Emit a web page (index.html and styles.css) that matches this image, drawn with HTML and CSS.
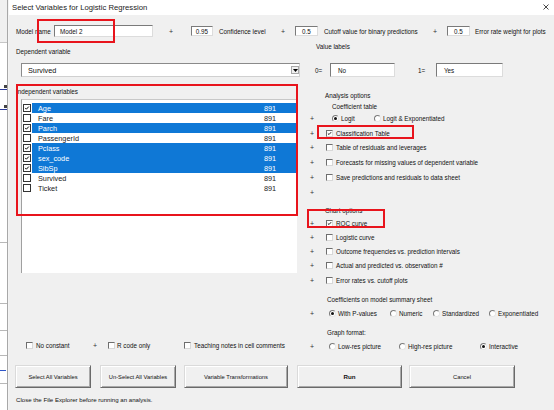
FILE: index.html
```html
<!DOCTYPE html>
<html>
<head>
<meta charset="utf-8">
<title>Select Variables for Logistic Regression</title>
<link rel="stylesheet" href="styles.css">
</head>
<body>
<div class="page">
  <div class="strip">
    <div class="strip-inner">
      <div class="s-gray"></div>
      <div class="s-frag s-f1"></div>
      <div class="s-uline"></div>
      <div class="s-frag s-f2"></div>
      <div class="s-uline"></div>
      <div class="s-line s-l1"></div>
      <div class="s-line s-l2"></div>
      <div class="s-line s-l3"></div>
      <div class="s-line s-l4"></div>
      <div class="s-blue"></div>
      <div class="s-line s-l5"></div>
    </div>
  </div>

  <div class="dialog">
    <div class="titlebar">
      <span class="title">Select Variables for Logistic Regression</span>
      <svg class="close" width="6" height="6" viewBox="0 0 6 6"><path d="M0.5 0.5 L5.5 5.5 M5.5 0.5 L0.5 5.5" stroke="#333" stroke-width="0.9" fill="none"/></svg>
    </div>

    <div class="content">
      <div class="toprow">
        <span class="lbl w-model">Model name</span>
        <span class="inp inp-model">Model 2</span>
        <span class="plus gap14">+</span>
        <span class="inp inp-num w22">0.95</span>
        <span class="lbl w60 ml6">Confidence level</span>
        <span class="plus">+</span>
        <span class="inp inp-num w23">0.5</span>
        <span class="lbl w107 ml6">Cutoff value for binary predictions</span>
        <span class="plus">+</span>
        <span class="inp inp-num w23">0.5</span>
        <span class="lbl ml5">Error rate weight for plots</span>
      </div>

      <div class="cols">
        <div class="leftcol">
          <div class="dep-label">Dependent variable</div>
          <div class="select">
            <span class="select-text">Survived</span>
            <span class="drop-btn"><svg width="5" height="3" viewBox="0 0 5 3"><path d="M0 0 H5 L2.5 3 Z" fill="#000"/></svg></span>
          </div>
          <div class="indep-label">Independent variables</div>
          <div class="list">
            <div class="row"><span class="lcb"><svg viewBox="0 0 8 8"><path d="M1.6 3.9 L3.2 5.6 L6.4 2.1" stroke="#000" stroke-width="1.3" fill="none"/></svg></span><span class="cell sel"><span class="name">Age</span><span class="num">891</span></span></div>
            <div class="row"><span class="lcb"></span><span class="cell"><span class="name">Fare</span><span class="num">891</span></span></div>
            <div class="row"><span class="lcb"><svg viewBox="0 0 8 8"><path d="M1.6 3.9 L3.2 5.6 L6.4 2.1" stroke="#000" stroke-width="1.3" fill="none"/></svg></span><span class="cell sel"><span class="name">Parch</span><span class="num">891</span></span></div>
            <div class="row"><span class="lcb"></span><span class="cell"><span class="name">PassengerId</span><span class="num">891</span></span></div>
            <div class="row"><span class="lcb"><svg viewBox="0 0 8 8"><path d="M1.6 3.9 L3.2 5.6 L6.4 2.1" stroke="#000" stroke-width="1.3" fill="none"/></svg></span><span class="cell sel"><span class="name">Pclass</span><span class="num">891</span></span></div>
            <div class="row"><span class="lcb"><svg viewBox="0 0 8 8"><path d="M1.6 3.9 L3.2 5.6 L6.4 2.1" stroke="#000" stroke-width="1.3" fill="none"/></svg></span><span class="cell sel"><span class="name">sex_code</span><span class="num">891</span></span></div>
            <div class="row"><span class="lcb"><svg viewBox="0 0 8 8"><path d="M1.6 3.9 L3.2 5.6 L6.4 2.1" stroke="#000" stroke-width="1.3" fill="none"/></svg></span><span class="cell sel"><span class="name">SibSp</span><span class="num">891</span></span></div>
            <div class="row"><span class="lcb"></span><span class="cell"><span class="name">Survived</span><span class="num">891</span></span></div>
            <div class="row"><span class="lcb"></span><span class="cell"><span class="name">Ticket</span><span class="num">891</span></span></div>
          </div>
          <div class="bottom-opts">
            <span class="cb"></span><span class="cb-text w55">No constant</span>
            <span class="plus">+</span>
            <span class="cb ml9"></span><span class="cb-text tight w67">R code only</span>
            <span class="cb"></span><span class="cb-text">Teaching notes in cell comments</span>
          </div>
        </div>

        <div class="rightcol">
          <div class="vl-label">Value labels</div>
          <div class="vrow">
            <span class="eq w15">0=</span>
            <span class="inp inp-val w65">No</span>
            <span class="eq ml23 w18">1=</span>
            <span class="inp inp-val w67">Yes</span>
          </div>
          <div class="ao-label">Analysis options</div>
          <div class="ct-label">Coefficient table</div>

          <div class="orow">
            <span class="plus">+</span>
            <span class="rgroup ml16">
              <span class="ropt w42"><span class="radio on"></span><span class="rtext">Logit</span></span>
              <span class="ropt"><span class="radio"></span><span class="rtext">Logit &amp; Exponentiated</span></span>
            </span>
          </div>
          <div class="orow">
            <span class="plus">+</span>
            <span class="cb ml10 checked"><svg viewBox="0 0 7 7"><path d="M1.2 3.4 L2.8 5 L5.8 1.6" stroke="#000" stroke-width="1.2" fill="none"/></svg></span><span class="cb-text">Classification Table</span>
          </div>
          <div class="orow">
            <span class="plus">+</span>
            <span class="cb ml10"></span><span class="cb-text">Table of residuals and leverages</span>
          </div>
          <div class="orow">
            <span class="plus">+</span>
            <span class="cb ml10"></span><span class="cb-text">Forecasts for missing values of dependent variable</span>
          </div>
          <div class="orow">
            <span class="plus">+</span>
            <span class="cb ml10"></span><span class="cb-text">Save predictions and residuals to data sheet</span>
          </div>
          <div class="orow">
            <span class="plus">+</span>
          </div>

          <div class="chart-label">Chart options</div>
          <div class="crow">
            <span class="plus">+</span>
            <span class="cb ml10 checked"><svg viewBox="0 0 7 7"><path d="M1.2 3.4 L2.8 5 L5.8 1.6" stroke="#000" stroke-width="1.2" fill="none"/></svg></span><span class="cb-text">ROC curve</span>
          </div>
          <div class="crow">
            <span class="plus">+</span>
            <span class="cb ml10"></span><span class="cb-text">Logistic curve</span>
          </div>
          <div class="crow">
            <span class="plus">+</span>
            <span class="cb ml10"></span><span class="cb-text">Outcome frequencies vs. prediction intervals</span>
          </div>
          <div class="crow">
            <span class="plus">+</span>
            <span class="cb ml10"></span><span class="cb-text">Actual and predicted vs. observation #</span>
          </div>
          <div class="crow">
            <span class="plus">+</span>
            <span class="cb ml10"></span><span class="cb-text">Error rates vs. cutoff plots</span>
          </div>

          <div class="cs-label">Coefficients on model summary sheet</div>
          <div class="rrow first">
            <span class="plus">+</span>
            <span class="rgroup ml13">
              <span class="ropt w61"><span class="radio on"></span><span class="rtext">With P-values</span></span>
              <span class="ropt w43"><span class="radio"></span><span class="rtext">Numeric</span></span>
              <span class="ropt w56"><span class="radio"></span><span class="rtext">Standardized</span></span>
              <span class="ropt"><span class="radio"></span><span class="rtext">Exponentiated</span></span>
            </span>
          </div>
          <div class="gf-label">Graph format:</div>
          <div class="rrow">
            <span class="plus">+</span>
            <span class="rgroup ml13">
              <span class="ropt w70"><span class="radio"></span><span class="rtext">Low-res picture</span></span>
              <span class="ropt w81"><span class="radio"></span><span class="rtext">High-res picture</span></span>
              <span class="ropt"><span class="radio on"></span><span class="rtext">Interactive</span></span>
            </span>
          </div>
        </div>
      </div>

      <div class="buttons">
        <span class="btn b1">Select All Variables</span>
        <span class="btn b2">Un-Select All Variables</span>
        <span class="btn b3">Variable Transformations</span>
        <span class="btn b4 bold">Run</span>
        <span class="btn b5">Cancel</span>
      </div>
      <div class="note">Close the File Explorer before running an analysis.</div>
    </div>
  </div>

  <div class="mark m-model"></div>
  <div class="mark m-indep"></div>
  <div class="mark m-class"></div>
  <div class="mark m-roc"></div>
</div>
</body>
</html>
```

FILE: styles.css
```css
* { box-sizing: border-box; margin: 0; padding: 0; }
html, body { width: 554px; height: 410px; overflow: hidden; }
body {
  font-family: "Liberation Sans", Arial, sans-serif;
  font-size: 6.3px;
  color: #111;
  background: #f0f0f0;
}
.page { position: relative; display: flex; width: 554px; height: 410px; }

/* left strip of the underlying spreadsheet */
.strip { width: 9px; flex: none; background: #f4f4f4; }
.strip-inner {
  width: 8px; height: 100%;
  background: #fff;
  border-right: 1px solid #a8a8a8;
  display: flex; flex-direction: column;
}
.s-gray { height: 43px; background: #f0f0f0; border-bottom: 1px solid #c6c6c6; flex: none; }
.s-frag { height: 3px; width: 3px; margin-left: 4px; background: #444; flex: none; }
.s-f1 { margin-top: 42px; }
.s-f2 { margin-top: 15px; }
.s-uline { height: 1px; width: 7px; background: #2b3a9a; margin-top: 1px; flex: none; }
.s-line { height: 1px; background: #b8b8b8; flex: none; }
.s-l1 { margin-top: 132px; }
.s-l2 { margin-top: 60px; }
.s-l3 { margin-top: 26px; }
.s-l4 { margin-top: 24px; }
.s-blue { height: 1px; width: 6px; background: #2f56c8; margin-top: 14px; flex: none; }
.s-l5 { margin-top: 12px; }

/* dialog */
.dialog { flex: 1; display: flex; flex-direction: column; }
.titlebar {
  height: 15px; background: #fff;
  display: flex; align-items: center; justify-content: space-between;
  padding: 0 5px 1px 3px;
  flex: none;
}
.title { font-size: 7.7px; color: #1a1a1a; }
.close { display: block; }

.content { flex: 1; display: flex; flex-direction: column; }

/* top row */
.toprow {
  display: flex; align-items: center;
  height: 14px; margin-top: 9px; padding-left: 7px;
  flex: none;
}
.lbl { white-space: nowrap; }
.w-model { width: 38px; }
.inp {
  background: #fff;
  border: 1px solid;
  border-color: #7a7a7a #dcdcdc #dcdcdc #7a7a7a;
  display: flex; align-items: center;
  white-space: nowrap;
  flex: none;
}
.inp-model { width: 99px; height: 12px; padding-left: 5px; }
.inp-num { height: 10px; justify-content: center; }
.inp-val { height: 14px; padding-left: 7px; }
.plus { width: 8px; text-align: center; font-size: 7px; color: #333; flex: none; }
.gap14 { margin-left: 14px; margin-right: 8px; }
.toprow .plus + .inp { margin-left: 8px; }
.w15 { width: 15px; } .w18 { width: 18px; } .w22 { width: 22px; } .w23 { width: 23px; }
.w42 { width: 42px; } .w43 { width: 43px; } .w55 { width: 55px; } .w56 { width: 56px; }
.w60 { width: 60px; } .w61 { width: 61px; } .w65 { width: 65px; } .w67 { width: 67px; }
.w70 { width: 70px; } .w81 { width: 81px; } .w107 { width: 107px; }
.ml5 { margin-left: 5px; } .ml6 { margin-left: 6px; } .ml9 { margin-left: 9px; }
.ml10 { margin-left: 10px; } .ml13 { margin-left: 13px; } .ml16 { margin-left: 16px; }
.ml23 { margin-left: 23px; }

/* columns */
.cols { display: flex; height: 313px; margin-top: 2px; flex: none; }
.leftcol { width: 296px; display: flex; flex-direction: column; flex: none; }
.rightcol { flex: 1; display: flex; flex-direction: column; }

.dep-label { margin-top: 7px; height: 10px; line-height: 10px; padding-left: 7px; }
.select {
  margin-top: 6px; margin-left: 12px;
  width: 279px; height: 14px;
  background: #fff;
  border: 1px solid; border-color: #8a8a8a #d0d0d0 #d0d0d0 #8a8a8a;
  display: flex; align-items: center; justify-content: space-between;
  padding-left: 6px;
}
.select-text { font-size: 7.3px; }
.drop-btn {
  width: 8px; height: 8px;
  background: #f0f0f0;
  border: 1px solid #a8a8a8;
  display: flex; align-items: center; justify-content: center;
}
.drop-btn svg { display: block; }
.indep-label { margin-top: 10px; height: 10px; line-height: 10px; padding-left: 7px; }

.list {
  margin-top: 2px; margin-left: 12px;
  width: 276px; height: 174px;
  background: #fff;
  border-left: 1px solid #a0a0a0;
  border-top: 1px solid #c8c8c8;
  padding-top: 3px;
}
.row { display: flex; align-items: center; height: 10px; }
.lcb {
  width: 8px; height: 8px; margin-left: 1px;
  border: 1px solid #333; background: #fff;
  flex: none;
}
.lcb svg { display: block; width: 6px; height: 6px; }
.cell {
  flex: 1; height: 10px; margin-left: 1px;
  display: flex; align-items: center;
  padding-left: 6px;
  font-size: 7.3px; color: #1a1a1a;
}
.cell.sel { background: #0f78d6; color: #fff; }
.name { width: 226px; }
.num { font-family: "Liberation Sans", Arial, sans-serif; }

.bottom-opts {
  margin-top: 67px; height: 10px;
  display: flex; align-items: center;
  padding-left: 17px;
}
.cb {
  width: 7px; height: 7px;
  background: #fff;
  border: 1px solid; border-color: #6e6e6e #d8d8d8 #d8d8d8 #6e6e6e;
  flex: none;
}
.cb svg { display: block; width: 5px; height: 5px; }
.cb-text { margin-left: 3px; white-space: nowrap; }
.cb-text.tight { margin-left: 2px; }

/* right column */
.vl-label { margin-top: 2px; height: 10px; line-height: 10px; padding-left: 11px; }
.vrow { margin-top: 11px; height: 14px; display: flex; align-items: center; padding-left: 10px; }
.eq { flex: none; }
.ao-label { margin-top: 14px; height: 10px; line-height: 10px; padding-left: 20px; }
.ct-label { margin-top: 1px; height: 9px; line-height: 9px; padding-left: 27px; }
.orow { height: 14.75px; display: flex; align-items: center; padding-left: 3px; }
.chart-label { margin-top: 6.5px; height: 10px; line-height: 10px; padding-left: 20px; }
.crow { height: 14.25px; display: flex; align-items: center; padding-left: 3px; }
.cs-label { margin-top: 7.25px; height: 10px; line-height: 10px; padding-left: 22px; }
.gf-label { margin-top: 8px; height: 10px; line-height: 10px; padding-left: 22px; }
.rrow { margin-top: 1px; height: 14px; display: flex; align-items: center; padding-left: 3px; }
.rrow.first { margin-top: 1.5px; }

.rgroup { display: flex; align-items: center; }
.ropt { display: flex; align-items: center; flex: none; }
.radio {
  width: 7px; height: 7px; border-radius: 50%;
  background: #fff;
  border: 1px solid; border-color: #7a7a7a #e6e6e6 #e6e6e6 #7a7a7a;
  display: flex; align-items: center; justify-content: center;
  flex: none;
}
.radio.on::after {
  content: ""; width: 3px; height: 3px; border-radius: 50%; background: #111;
}
.rtext { margin-left: 2px; white-space: nowrap; }

/* buttons */
.buttons {
  display: flex; height: 23px; margin-top: 12px; padding-left: 6px;
  flex: none;
}
.btn {
  height: 23px;
  display: flex; align-items: center; justify-content: center;
  background: #f0f0f0;
  border: 1px solid;
  border-color: #dadada #6a6a6a #6a6a6a #dadada;
  box-shadow: inset 1px 1px 0 #fff, inset -1px -1px 0 #a9a9a9;
  font-size: 5.8px; color: #111;
  white-space: nowrap;
  flex: none;
}
.b1 { width: 76px; }
.b2 { width: 76px; margin-left: 9px; }
.b3 { width: 104px; margin-left: 8px; }
.b4 { width: 105px; margin-left: 9px; }
.b5 { width: 106px; margin-left: 7px; }
.bold { font-weight: bold; font-size: 6.2px; }
.note { margin-top: 7px; height: 10px; line-height: 10px; padding-left: 7px; font-size: 6.1px; }

/* red annotation boxes drawn over the dialog */
.mark { position: absolute; border: 2px solid #e8141c; pointer-events: none; }
.m-model { left: 37px; top: 19px; width: 78px; height: 24px; }
.m-indep { left: 16px; top: 84px; width: 282px; height: 132px; }
.m-class { left: 317px; top: 125px; width: 97px; height: 14px; }
.m-roc { left: 307px; top: 209px; width: 78px; height: 19px; }
```
